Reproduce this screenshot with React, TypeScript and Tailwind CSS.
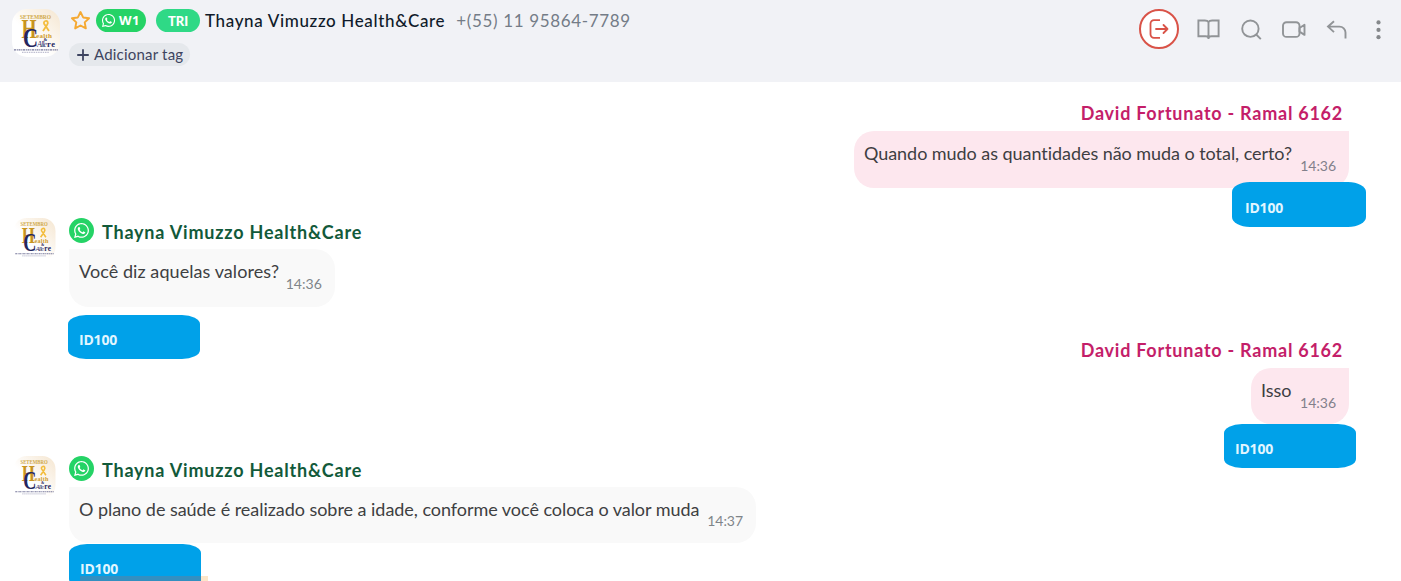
import type { ReactNode } from "react";
import { FaWhatsapp } from "react-icons/fa";

function Avatar() {
  return (
    <svg viewBox="0 0 48 48" className="block h-full w-full">
      <defs>
        <linearGradient id="avatarGlow" x1="0" y1="1" x2="1" y2="0">
          <stop offset="0.4" stopColor="#ffffff" />
          <stop offset="1" stopColor="#f5e6d0" />
        </linearGradient>
      </defs>
      <rect width="48" height="48" rx="15" fill="url(#avatarGlow)" />
      <g fontFamily="Liberation Serif, serif" fontWeight="700">
        <text x="8" y="9.500" fontSize="6.500" textLength="31" lengthAdjust="spacingAndGlyphs" fill="#d0a94a">SETEMBRO</text>
        <text x="9.500" y="29" fontSize="27" textLength="15" lengthAdjust="spacingAndGlyphs" fill="#c8951f">H</text>
        <text x="11" y="38" fontSize="28" textLength="15" lengthAdjust="spacingAndGlyphs" fill="#25265e">C</text>
        <text x="24" y="28.500" fontSize="7" textLength="16" fill="#cf9c2c">ealth</text>
        <text x="31.500" y="32" fontSize="4.500" fill="#25265e">&amp;</text>
        <text x="25" y="38" fontSize="8" textLength="10" fontStyle="italic" fontWeight="400" fill="#34356b">Alle</text>
        <text x="35" y="38" fontSize="8.500" textLength="8" fill="#25265e">re</text>
      </g>
      <path d="M31 22l4-6c2-3 0-4.500-1.500-4S31 14 33 16l4 6" fill="none" stroke="#f3bd3d" strokeWidth="1.800" />
      <path d="M2 40.800h44" stroke="#77789b" strokeWidth="1.300" strokeDasharray="2 .7 1.200 .6" />
      <path d="M10 43.300h27" stroke="#b0b0c6" strokeWidth="1" strokeDasharray="1.500 .8" />
    </svg>
  );
}

function Icon({ children }: { children: ReactNode }) {
  return (
    <svg viewBox="0 0 24 24" className="h-6 w-6 shrink-0" fill="none" stroke="#919497" strokeWidth="1.900">
      {children}
    </svg>
  );
}

function Tag({ className }: { className: string }) {
  return (
    <div
      className={`relative flex shrink-0 items-center bg-[#00a1e9] pt-1.5 font-['Open_Sans',sans-serif] text-[14px] leading-5 font-bold text-[#e2f6ff] ${className}`}
    >
      <span className="tracking-[-0.2px]">ID100</span>
    </div>
  );
}

function Outgoing({ text, width, tag, className }: { text: string; width: string; tag: string; className: string }) {
  return (
    <article className={`flex flex-col items-end pr-[52px] ${className}`}>
      <h3 className="mr-[6px] h-[29px] shrink-0 text-[18px] leading-[23px] font-bold tracking-[0.75px] text-[#c41e69]">
        David Fortunato - Ramal 6162
      </h3>
      <div className={`flex shrink-0 rounded-[20px] rounded-tr-none bg-[#fde7ee] pl-[10px] ${width}`}>
        <p className="pt-[10px] text-[18px] leading-6 whitespace-nowrap text-[#3e3e42]">{text}</p>
        <time className="mr-[13px] ml-auto pt-[25px] text-[14px] leading-5 text-[#82808b]">14:36</time>
      </div>
      <Tag className={tag} />
    </article>
  );
}

function Incoming({ text, time, width, tag, className }: { text: string; time: string; width: string; tag: string; className: string }) {
  return (
    <article className={`flex ${className}`}>
      <div className="ml-[13px] h-[42px] w-[43px] shrink-0">
        <Avatar />
      </div>
      <div className="ml-[13px]">
        <div className="flex h-[31px] items-start">
          <span className="flex h-[25px] w-[25px] items-center justify-center rounded-full bg-[#25d366] text-[17px] text-white">
            <FaWhatsapp />
          </span>
          <h3 className="mt-[2px] ml-2 text-[18px] leading-6 font-bold tracking-[0.8px] whitespace-nowrap text-[#125a3a]">
            Thayna Vimuzzo Health&amp;Care
          </h3>
        </div>
        <div className={`flex rounded-[20px] rounded-tl-none bg-[#f9f9f9] pl-[10px] ${width}`}>
          <p className="pt-[10px] text-[18px] leading-6 whitespace-nowrap text-[#3e4042]">{text}</p>
          <time className="mr-[13px] ml-auto pt-[25px] text-[14px] leading-5 text-[#7f8589]">{time}</time>
        </div>
        <Tag className={tag} />
      </div>
    </article>
  );
}

export default function App() {
  return (
    <div className="relative flex h-[581px] w-[1401px] flex-col overflow-hidden bg-white font-[Lato,sans-serif]">
      <header className="flex h-[82px] shrink-0 items-start bg-[#f1f2f6] pr-[9px]">
        <div className="mt-[9px] ml-3 h-12 w-12 shrink-0">
          <Avatar />
        </div>
        <div className="ml-[9px]">
          <div className="mt-[9px] flex h-[23px] items-center">
            <svg viewBox="0 0 24 24" className="ml-px h-[21px] w-[21px]" fill="none" stroke="#f5a932" strokeWidth="2.200" strokeLinejoin="round">
              <path d="M12 2.300l3 6.200 6.800.9-5 4.700 1.300 6.900L12 17.700 5.900 21l1.300-6.900-5-4.700 6.800-.9z" />
            </svg>
            <span className="ml-[5px] flex h-[23px] w-[50px] items-center rounded-full bg-[#25d366] pl-[5px] font-['Open_Sans',sans-serif] text-[13px] font-bold text-white">
              <FaWhatsapp className="mr-[3px] text-[15px]" />
              <span className="pb-0.5 leading-5 tracking-[0.4px]">W1</span>
            </span>
            <span className="ml-[10px] flex h-[23px] w-11 items-center justify-center rounded-full bg-[#2fd986] text-[13px] leading-5 font-black text-white">
              TRI
            </span>
            <h2 className="ml-[5px] text-[17px] leading-6 font-medium tracking-[0.64px] whitespace-nowrap text-[#101b2a]">
              Thayna Vimuzzo Health&amp;Care
            </h2>
            <span className="ml-[11px] text-[17px] leading-6 tracking-[0.65px] whitespace-nowrap text-[#747c87]">
              +(55) 11 95864-7789
            </span>
          </div>
          <button className="mt-[11px] flex h-[23px] w-[121px] items-center rounded-full bg-[#e5e8ec] pl-2 text-[15px] leading-5 text-[#3d4460]">
            <svg viewBox="0 0 12 12" className="mr-[5px] h-3 w-3" stroke="currentColor" strokeWidth="1.800" strokeLinecap="round">
              <path d="M6 .9v10.200M.9 6h10.200" />
            </svg>
            <span className="pb-0.5 tracking-[0.2px]">Adicionar tag</span>
          </button>
        </div>
        <nav className="mt-[9px] ml-auto flex h-10 items-center gap-[19px]">
          <span className="-mr-[2px] flex h-10 w-10 items-center justify-center rounded-full border-2 border-[#d95348] bg-white">
            <svg viewBox="0 0 24 24" className="h-6 w-6" fill="none" stroke="#d95348" strokeWidth="1.800">
              <path d="M13 3.200H7a3.500 3.500 0 0 0-3.500 3.500v10.600A3.500 3.500 0 0 0 7 20.800h6" />
              <path d="M9 12h11.500m-4-4 4 4-4 4" strokeLinecap="round" strokeLinejoin="round" />
            </svg>
          </span>
          <Icon>
            <path d="M12.500 5.200C11.800 3.800 10.500 3.500 8.800 3.500H2.400v15.800h7c1.700 0 3.100.7 3.100 2.200 0-1.500 1.400-2.200 3.100-2.200h7V3.500h-6.400c-1.700 0-3 .3-3.700 1.700zm0 0V22" />
          </Icon>
          <Icon>
            <circle cx="11.400" cy="11.700" r="8.200" />
            <path d="m17.200 17.500 4.600 4.600" />
          </Icon>
          <Icon>
            <rect x="1" y="5.200" width="16.500" height="14.700" rx="3.500" />
            <path d="M17.500 11l5-3.300v10.200l-5-3.300z" strokeLinejoin="round" />
          </Icon>
          <Icon>
            <path d="M9 4.200 3 9.600l6 5.500M3.300 9.600h11.200a6 6 0 0 1 6 6v5.800" />
          </Icon>
          <Icon>
            <g fill="#85888b" stroke="none">
              <circle cx="10.500" cy="5.400" r="2.100" />
              <circle cx="10.500" cy="12.900" r="2.100" />
              <circle cx="10.500" cy="20.200" r="2.100" />
            </g>
          </Icon>
        </nav>
      </header>
      <main className="h-[499px]">
        <Outgoing
          className="h-[136px] pt-[20px]"
          text="Quando mudo as quantidades não muda o total, certo?"
          width="h-[57px] w-[495px] tracking-[-0.05px]"
          tag="-mt-[6px] -mr-[17px] h-[45px] w-[134px] rounded-[18px/10px] pl-[13px]"
        />
        <Incoming
          className="h-[121px]"
          text="Você diz aquelas valores?"
          time="14:36"
          width="h-[58px] w-[266px] tracking-[0.07px]"
          tag="mt-[8px] -ml-px h-11 w-[132px] rounded-[18px/9px] pl-[11px]"
        />
        <Outgoing
          className="h-[117px]"
          text="Isso"
          width="h-[56px] w-[98px]"
          tag="-mr-[7px] h-11 w-[132px] rounded-[18px/9px] pl-[11px]"
        />
        <Incoming
          className="h-[125px]"
          text="O plano de saúde é realizado sobre a idade, conforme você coloca o valor muda"
          time="14:37"
          width="h-[56px] w-[687px] tracking-[-0.04px] [&>time]:pt-[24px]"
          tag="mt-px h-11 w-[132px] rounded-[18px/9px] pl-[11px]"
        />
      </main>
      <div className="absolute bottom-0 left-[80px] flex h-[5px] w-32">
        <span className="w-[121px] bg-[#348fc0]" />
        <span className="w-[7px] bg-[#fde6c8]" />
      </div>
    </div>
  );
}
